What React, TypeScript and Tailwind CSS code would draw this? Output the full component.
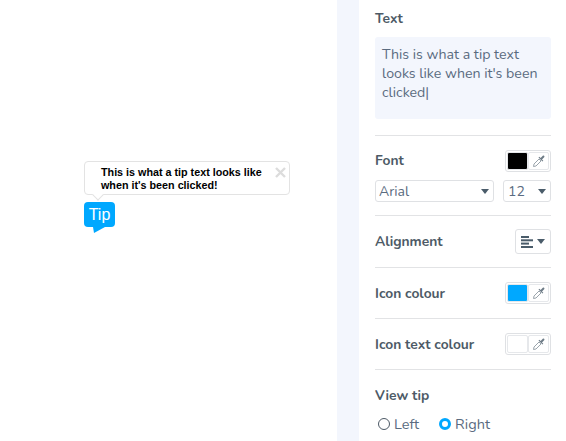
import React from 'react';

const Dropper = () => (
  <svg width="14" height="14" viewBox="0 0 14 14">
    <path d="M1.5 12.5 L2 10 L7 5 L9 7 L4 12 Z" fill="#fff" stroke="#9aa4ac" strokeWidth="1" />
    <path d="M6.5 3.5 L10.5 7.5 L11.3 6.7 L10 5.4 L12.2 3.2 C13 2.2 11.8 1 10.8 1.8 L8.6 4 L7.3 2.7 Z" fill="#6d7b86" />
  </svg>
);

const Swatch = ({ color }: { color: string }) => (
  <div className="flex h-[22px] w-[46px] rounded-[3px] border border-[#dfe1e4] p-px">
    <div className="h-full w-[21px] rounded-[2px] border border-[#e6e8eb]" style={{ background: color }} />
    <div className="flex flex-1 items-center justify-center rounded-[2px] border border-[#e6e8eb]">
      <Dropper />
    </div>
  </div>
);

const Caret = () => (
  <svg width="8" height="5" viewBox="0 0 8 5"><path d="M0 0H8L4 5Z" fill="#4a5c6a" /></svg>
);

const Row = ({ label, color }: { label: string; color: string }) => (
  <div className="flex h-[51px] items-center justify-between border-b border-[#e2e3e5]">
    <span className="pt-[2px] text-[13.8px] font-bold text-[#4d5a66]">{label}</span>
    <Swatch color={color} />
  </div>
);

export default function App() {
  return (
    <div className="flex h-[441px] w-[566px] overflow-hidden bg-white font-['Nunito','Lato','Noto_Sans',sans-serif] text-[#4d5a66]">
      <div className="relative w-[337px] shrink-0">
        <div className="absolute left-[84px] top-[161px] h-[34px] w-[206px] rounded-[4px] border border-[#e3e3e3] bg-white pl-4 pt-[4px] font-['Liberation_Sans',sans-serif] text-[10.75px] font-bold leading-[13px] text-black">
          <p>This is what a tip text looks like<br />when it's been clicked!</p>
          <span className="absolute right-[3px] top-[5px]">
            <svg width="11" height="11" viewBox="0 0 11 11"><path d="M1 1L10 10M10 1L1 10" stroke="#dcdcdc" strokeWidth="2.4" /></svg>
          </span>
          <span className="absolute bottom-[-5px] left-[9px] h-2 w-2 rotate-45 border-b border-r border-[#e3e3e3] bg-white" />
        </div>
        <div className="absolute left-[84px] top-[202px] flex h-[25px] w-[31px] items-center justify-center rounded-[4px] bg-[#00a8ff] font-['Liberation_Sans',sans-serif] text-[16px] text-white">
          Tip
          <svg className="absolute left-[9px] top-[25px]" width="12" height="6" viewBox="0 0 12 6"><path d="M0 0H12L1 6Z" fill="#00a8ff" /></svg>
        </div>
      </div>
      <div className="w-[22px] shrink-0 bg-[#f3f6fd]" />
      <div className="ml-4 w-[176px] shrink-0">
        <h3 className="mt-[10px] text-[13.8px] font-bold leading-[18px]">Text</h3>
        <div className="mt-[9px] h-[82px] rounded-[3px] bg-[#f3f6fd] px-[7px] py-[8px] text-[14.2px] leading-[19px] text-[#5a6b80]">
          This is what a tip text looks like when it's been clicked|
        </div>
        <div className="mt-4 border-t border-[#e2e3e5]" />
        <div className="border-b border-[#e2e3e5] pb-[13px]">
          <div className="mt-[14px] flex items-center justify-between">
            <span className="text-[13.8px] font-bold">Font</span>
            <Swatch color="#000000" />
          </div>
          <div className="mt-[8px] flex justify-between">
            <div className="flex h-[22px] w-[119px] items-center justify-between rounded-[3px] border border-[#dfe1e4] pl-[3px] pr-1 text-[14px] text-[#5a6b80]">
              Arial <Caret />
            </div>
            <div className="flex h-[22px] w-[48px] items-center justify-between rounded-[3px] border border-[#dfe1e4] pl-1 pr-1 text-[14px] text-[#5a6b80]">
              12 <Caret />
            </div>
          </div>
        </div>
        <div className="flex h-[52px] items-center justify-between border-b border-[#e2e3e5]">
          <span className="pt-[2px] text-[13.8px] font-bold">Alignment</span>
          <div className="flex h-[25px] w-9 items-center justify-center gap-1 rounded-[3px] border border-[#dfe1e4]">
            <svg width="12" height="12" viewBox="0 0 12 12" fill="#4a5c6a">
              <rect y="0" width="8" height="2" /><rect y="3.3" width="12" height="2" /><rect y="6.6" width="8" height="2" /><rect y="10" width="12" height="2" />
            </svg>
            <Caret />
          </div>
        </div>
        <Row label="Icon colour" color="#00a8ff" />
        <Row label="Icon text colour" color="#ffffff" />
        <h3 className="mt-[17px] text-[13.8px] font-bold leading-[18px]">View tip</h3>
        <div className="mt-[10px] flex items-center text-[14.5px] leading-[18px] text-[#5a6b80]">
          <span className="ml-[3px] h-3 w-3 rounded-full border border-[#4d5a66]" />
          <span className="ml-[4px]">Left</span>
          <span className="ml-[20px] h-3 w-3 rounded-full border-[3.5px] border-[#00a8ff]" />
          <span className="ml-[4px]">Right</span>
        </div>
      </div>
    </div>
  );
}
